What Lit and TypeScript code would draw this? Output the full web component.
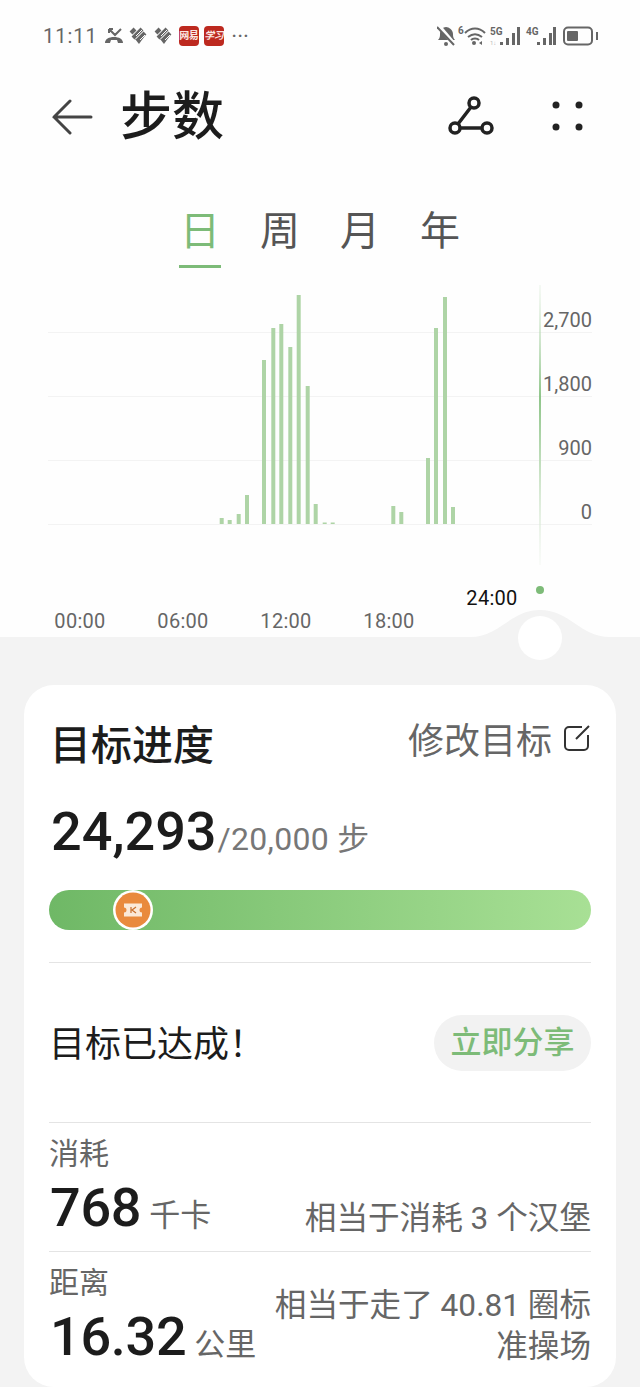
import {LitElement, html, css, svg} from 'lit';
import {customElement} from 'lit/decorators.js';

const BASE = 524;
// x position and top of each hourly bar
const BARS: [number, number][] = [
  [221.7, 518], [229.7, 520], [238.7, 514], [247, 495], [264, 360], [273.3, 328], [281.3, 324],
  [290.3, 347], [298.7, 295], [307.7, 386], [315.7, 504], [324.7, 522.5], [332.7, 522.5],
  [393.3, 506], [401.3, 512], [428, 458], [436, 328], [445, 297], [453, 507],
];
const GRID = [{y: 332, label: '2,700'}, {y: 396, label: '1,800'}, {y: 460, label: '900'}, {y: 524, label: '0'}];
const TIMES = [{x: 80, label: '00:00'}, {x: 183, label: '06:00'}, {x: 286, label: '12:00'}, {x: 389, label: '18:00'}];
// signal bars as [x, top], bottom is always y=21
const SIGNAL: [number, number][] = [
  [63, 18], [69, 14], [75, 9], [80, 3],
  [100, 18], [106, 14], [112, 9], [116, 3],
];

@customElement('app-root')
export class AppRoot extends LitElement {
  static styles = css`
    :host {
      display: block;
      width: 640px;
      height: 1387px;
      overflow: hidden;
      background: #fefefe;
      color: #1c1c1c;
      font-family: Roboto, "Noto Sans CJK SC", sans-serif;
    }
    .status {
      height: 72px;
      box-sizing: border-box;
      padding: 24px 42px 0 43px;
      display: flex;
      align-items: flex-start;
      justify-content: space-between;
      color: #666;
    }
    .status-left, .status-right { display: flex; align-items: center; height: 24px; }
    .clock { font-size: 20px; letter-spacing: 1px; margin-right: 6px; }
    .status-left svg { margin-right: 5px; }
    .app {
      width: 20px;
      height: 20px;
      border-radius: 4px;
      background: #bd291f;
      color: #fbe7e3;
      font-size: 10px;
      font-weight: 700;
      letter-spacing: -0.5px;
      line-height: 19px;
      text-align: center;
      margin-right: 5px;
      overflow: hidden;
      white-space: nowrap;
    }
    .app.slant { font-style: italic; }
    .more { font-size: 16px; font-weight: 700; line-height: 14px; margin-left: 3px; letter-spacing: 1px; }
    .header {
      height: 92px;
      box-sizing: border-box;
      padding: 0 54px 0 52px;
      display: flex;
      align-items: center;
    }
    .title { font-size: 52px; font-weight: 500; margin-left: 26px; flex: 1; line-height: 92px; }
    .share { margin-right: 58px; }
    .tabs {
      display: flex;
      justify-content: center;
      gap: 40px;
      height: 124px;
      box-sizing: border-box;
      padding: 39px 0 0 0;
    }
    .tab { width: 40px; height: 58px; font-size: 40px; line-height: 58px; color: #555; text-align: center; position: relative; }
    .tab.on { color: #7dbb78; }
    .tab.on::after {
      content: '';
      position: absolute;
      left: -1px;
      right: -1px;
      top: 62px;
      height: 3px;
      background: #7dbb78;
    }
    .chart { display: block; margin-top: -8px; }
    .chart text { font-family: Roboto, sans-serif; font-size: 20px; fill: #666; }
    .chart text.time { letter-spacing: 0.3px; }
    .chart text.now { fill: #111; letter-spacing: 0.3px; }
    .lower { background: #f3f3f3; height: 727px; padding: 25px 24px 0; box-sizing: border-box; }
    .card {
      background: #fff;
      border-radius: 30px;
      height: 702px;
      box-sizing: border-box;
      padding: 0 25px;
    }
    .goal-head { display: flex; align-items: center; justify-content: space-between; height: 118px; padding-bottom: 4px; box-sizing: border-box; margin-left: 1px; }
    .goal-title { font-size: 41px; font-weight: 500; }
    .edit { display: flex; align-items: center; gap: 11px; font-size: 36px; color: #666; margin-top: -8px; margin-left: -1px; }
    .count { display: flex; align-items: baseline; padding-left: 2px; height: 57px; line-height: 57px; }
    .count b { font-size: 54px; font-weight: 500; }
    .count span { font-size: 32px; color: #777; margin-left: 1px; letter-spacing: 0.3px; }
    .bar {
      height: 40px;
      border-radius: 20px;
      margin-top: 30px;
      background: linear-gradient(90deg, #6fb866, #a8e095);
      position: relative;
    }
    .knob { position: absolute; left: 64px; top: 0; }
    .rule { height: 1px; background: #e4e4e4; }
    .done { margin-top: 32px; }
    .reached { display: flex; align-items: center; justify-content: space-between; height: 159px; padding-left: 2px; }
    .reached span { font-size: 36px; margin-top: -4px; margin-left: -2px; }
    .btn {
      height: 56px;
      width: 157px;
      border-radius: 28px;
      background: #f2f2f2;
      color: #7dbb78;
      font-size: 31px;
      font-weight: 500;
      line-height: 56px;
      text-align: center;
    }
    .stat { height: 128px; box-sizing: border-box; padding: 12px 0 0 0; }
    .stat-name { font-size: 30px; line-height: 38px; color: #666; margin-bottom: 4px; }
    .stat-row { display: flex; justify-content: space-between; align-items: flex-end; }
    .stat-val { display: flex; align-items: baseline; gap: 8px; white-space: nowrap; line-height: 62px; padding-left: 1px; }
    .stat-val b { font-size: 54px; font-weight: 500; letter-spacing: -0.3px; }
    .stat-val span { font-size: 31px; color: #666; }
    .stat-note { font-size: 31.6px; line-height: 41px; color: #666; text-align: right; width: 322px; margin-bottom: 8px; }
    .stat-note.two { margin-top: -47px; margin-bottom: 9px; }
  `;

  renderStatus() {
    return html`
      <div class="status">
        <div class="status-left">
          <span class="clock">11:11</span>
          <svg width="20" height="20" viewBox="0 0 20 20" fill="none" stroke="#666" stroke-width="2">
            <path d="M1 17c0-4 4-6 9-6s9 2 9 6h-5l-1-3H7l-1 3z" fill="#666" stroke="none"/>
            <path d="M5 3l6 6 6-6M5 3v4M5 3h4"/>
          </svg>
          ${[0, 1].map(() => svg`
            <svg width="20" height="20" viewBox="0 0 20 20" fill="none" stroke="#666" stroke-width="4">
              <path d="M2 7l4-4M4 12l9-9M9 14l7-7"/>
              <path d="M6 13l4 5 5-7" fill="#666" stroke="none"/>
              <path d="M7 10l6-6M11 14l5-5" stroke="#fefefe" stroke-width="1"/>
            </svg>`)}
          <span class="app">网易</span>
          <span class="app slant">学习</span>
          <span class="more">···</span>
        </div>
        <div class="status-right">
          <svg width="161" height="24" viewBox="0 0 161 24" fill="#666">
            <path d="M1 16c2-2 2-4 2-6 0-4 3-7 6-7s7 3 7 7c0 2 0 4 2 6z"/>
            <path d="M1 1l17 20" stroke="#fefefe" stroke-width="4"/>
            <path d="M0 3l17 18" stroke="#666" stroke-width="2"/>
            <circle cx="9" cy="20" r="2"/>
            <text x="21" y="10" font-size="10" font-family="Roboto" font-weight="700">6</text>
            <g fill="none" stroke="#666" stroke-width="2">
              <path d="M28 9c6-6 14-6 20 0M31 13c5-4 9-4 14 0M34 16c2-2 6-2 8 0"/>
            </g>
            <circle cx="37" cy="19" r="2"/>
            <path d="M42 19l3-2v4z"/>
            <text x="53" y="11" font-size="10" font-family="Roboto" font-weight="700">5G</text>
            <text x="53" y="21" font-size="6" font-family="Roboto" fill="#bbb">1↓</text>
            <text x="89" y="11" font-size="10" font-family="Roboto" font-weight="700">4G</text>
            ${SIGNAL.map(([x, top]) => svg`<rect x=${x} y=${top} width="3" height=${21 - top}/>`)}
            <rect x="127" y="3.500" width="28" height="17" rx="4" fill="none" stroke="#666" stroke-width="2"/>
            <rect x="130" y="7" width="11" height="10" rx="1"/>
            <rect x="159" y="8" width="2" height="8"/>
          </svg>
        </div>
      </div>`;
  }

  renderChart() {
    return svg`
      <svg class="chart" width="640" height="380" viewBox="0 280 640 380">
        <defs>
          <linearGradient id="cursor" x1="0" y1="0" x2="0" y2="1">
            <stop offset="0" stop-color="#cfe5cb" stop-opacity="0.2"/>
            <stop offset="0.4" stop-color="#8fc58a"/>
            <stop offset="0.7" stop-color="#cfe5cb"/>
            <stop offset="1" stop-color="#e6efe4" stop-opacity="0.2"/>
          </linearGradient>
        </defs>
        ${GRID.map(g => svg`
          <rect x="48" y=${g.y} width="544" height="1" fill="#f3f3f3"/>
          <text x="592" y=${g.y - 5} text-anchor="end">${g.label}</text>`)}
        ${BARS.map(([x, top]) => svg`
          <rect x=${x - 2} y=${top} width="4" height=${BASE - top} fill="#aed4a6"/>`)}
        <rect x="539" y="285" width="2" height="280" fill="url(#cursor)"/>
        <circle cx="540" cy="590" r="4" fill="#7dbb78"/>
        <text class="now" x="492" y="605" text-anchor="middle">24:00</text>
        ${TIMES.map(t => svg`<text class="time" x=${t.x} y="628" text-anchor="middle">${t.label}</text>`)}
        <path d="M0 637H470C500 637 510 610 540 610C570 610 580 637 610 637H640V660H0Z" fill="#f3f3f3"/>
        <circle cx="540" cy="638" r="22" fill="#fff"/>
      </svg>`;
  }

  renderKnob() {
    return html`
      <svg class="knob" width="40" height="40" viewBox="0 0 40 40">
        <circle cx="20" cy="20" r="20" fill="#fff"/>
        <circle cx="20" cy="20" r="17.500" fill="#e98a3d"/>
        <path d="M11 13.500h18v4a2.500 2.500 0 0 0 0 5v4H11v-4a2.500 2.500 0 0 0 0-5z" fill="#fbe9d8"/>
        <path d="M18 17v6M23 17l-4 3 4 3" stroke="#c9702c" stroke-width="1.200" fill="none"/>
      </svg>`;
  }

  render() {
    return html`
      ${this.renderStatus()}
      <div class="header">
        <svg width="42" height="40" viewBox="0 0 42 40" fill="none" stroke="#444" stroke-width="3" stroke-linecap="round">
          <path d="M39 19H2M18 3L2 19l16 16"/>
        </svg>
        <span class="title">步数</span>
        <svg class="share" width="46" height="44" viewBox="0 0 46 44" fill="none" stroke="#222" stroke-width="3.500">
          <circle cx="26" cy="7" r="5"/><circle cx="7" cy="32" r="5"/><circle cx="39" cy="32" r="5"/>
          <path d="M23 11L10 28M12 32h22"/>
        </svg>
        <svg width="34" height="34" viewBox="0 0 34 34" fill="#222">
          <circle cx="4" cy="4" r="3.500"/><circle cx="27" cy="4" r="3.500"/>
          <circle cx="4" cy="26" r="3.500"/><circle cx="27" cy="26" r="3.500"/>
        </svg>
      </div>
      <div class="tabs">
        <span class="tab on">日</span><span class="tab">周</span><span class="tab">月</span><span class="tab">年</span>
      </div>
      ${this.renderChart()}
      <div class="lower">
        <div class="card">
          <div class="goal-head">
            <span class="goal-title">目标进度</span>
            <span class="edit">修改目标
              <svg width="28" height="28" viewBox="0 0 28 28" fill="none" stroke="#333" stroke-width="2">
                <path d="M19 3H6a4 4 0 0 0-4 4v15a4 4 0 0 0 4 4h15a4 4 0 0 0 4-4V11M13 15L26 2"/>
              </svg>
            </span>
          </div>
          <div class="count"><b>24,293</b><span>/20,000 步</span></div>
          <div class="bar">${this.renderKnob()}</div>
          <div class="rule done"></div>
          <div class="reached"><span>目标已达成！</span><div class="btn">立即分享</div></div>
          <div class="rule"></div>
          <div class="stat">
            <div class="stat-name">消耗</div>
            <div class="stat-row">
              <div class="stat-val"><b>768</b><span>千卡</span></div>
              <div class="stat-note">相当于消耗 3 个汉堡</div>
            </div>
          </div>
          <div class="rule"></div>
          <div class="stat">
            <div class="stat-name">距离</div>
            <div class="stat-row">
              <div class="stat-val"><b>16.32</b><span>公里</span></div>
              <div class="stat-note two">相当于走了 40.81 圈标准操场</div>
            </div>
          </div>
        </div>
      </div>
    `;
  }
}
